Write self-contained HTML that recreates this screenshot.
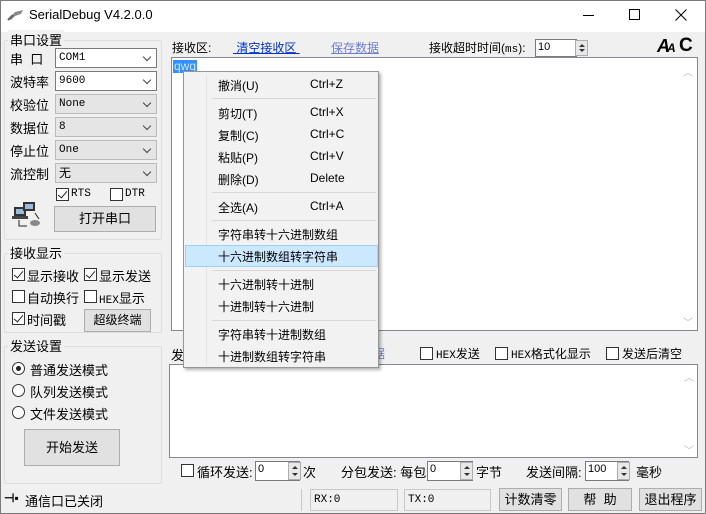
<!DOCTYPE html>
<html><head><meta charset="utf-8"><style>
*{box-sizing:border-box;margin:0;padding:0}
body{width:706px;height:514px;overflow:hidden;background:#f0f0f0;font-family:"Liberation Sans","Noto Sans CJK SC",sans-serif;font-size:12px;color:#000;position:relative}
.a{position:absolute;white-space:nowrap}
.win{position:absolute;left:0;top:0;width:706px;height:514px;border:1px solid #7a7a7a}
.title{position:absolute;left:1px;top:1px;width:704px;height:31px;background:#fff}
.gb{position:absolute;border:1px solid #dcdcdc;border-radius:2px}
.gl{position:absolute;background:#f0f0f0;padding:0 2px;font-size:13px}
.cb{position:absolute;height:20px;border:1px solid #bbb;background:#e5e5e5;font-family:"Liberation Mono","Noto Sans CJK SC",monospace;font-size:11px;line-height:18px;padding-left:3px}
.cb.w{background:#fff;border-color:#7a7a7a}
.cb:after{content:"";position:absolute;right:6px;top:5px;width:5px;height:5px;border-right:1px solid #444;border-bottom:1px solid #444;transform:rotate(45deg)}
.chk{position:absolute;width:13px;height:13px;border:1px solid #333;background:#fff}
.chk.on:after{content:"";position:absolute;left:3px;top:0px;width:4px;height:8px;border-right:1.5px solid #222;border-bottom:1.5px solid #222;transform:rotate(40deg)}
.rad{position:absolute;width:13px;height:13px;border:1px solid #333;border-radius:50%;background:#fff}
.rad.on:after{content:"";position:absolute;left:3px;top:3px;width:5px;height:5px;border-radius:50%;background:#222}
.btn{position:absolute;border:1px solid #adadad;background:#e1e1e1;text-align:center;font-size:13px}
.ta{position:absolute;background:#fff;border:1px solid #828790}
.inp{position:absolute;background:#fff;border:1px solid #7a7a7a;font-size:11px;padding-left:2px;line-height:15px}
.sp{position:absolute;border:1px solid #adadad;background:#e8e8e8}
.sp:before,.sp:after{content:"";position:absolute;left:3px;border-left:3px solid transparent;border-right:3px solid transparent}
.sp:before{top:3px;border-bottom:3px solid #333}
.sp:after{bottom:3px;border-top:3px solid #333}
.sb{position:absolute;border:1px solid #c8c8c8;background:#f0f0f0;font-family:"Liberation Mono",monospace;font-size:11px;padding-left:3px;line-height:20px}
.menu{position:absolute;left:183px;top:71px;width:196px;height:297px;background:#f2f2f2;border:1px solid #979797;box-shadow:2px 2px 3px rgba(0,0,0,.3)}
.mi{position:absolute;left:34px;font-size:12px}
.sc{position:absolute;left:126px;font-size:12px}
.sep{position:absolute;left:28px;width:164px;height:1px;background:#d7d7d7}
.m3{font-family:"Liberation Mono","Noto Sans CJK SC",monospace;font-size:11px}
</style></head><body>
<div class="win"></div>
<div class="title"></div>
<svg class="a" style="left:7px;top:8px" width="18" height="14"><path d="M2 11 L8 4 L16 2 L14 6 L8 8 L4 12Z" fill="#8a8a8a"/><path d="M1 12 L6 7" stroke="#666" stroke-width="2"/></svg>
<div class="a" style="left:29px;top:7px;font-size:13px">SerialDebug V4.2.0.0</div>
<div class="a" style="left:583px;top:15px;width:11px;height:1px;background:#000"></div>
<div class="a" style="left:629px;top:9px;width:11px;height:11px;border:1px solid #000"></div>
<svg class="a" style="left:675px;top:9px" width="12" height="12"><path d="M0.5 0.5 L11.5 11.5 M11.5 0.5 L0.5 11.5" stroke="#000" stroke-width="1"/></svg>

<!-- 串口设置 -->
<div class="gb" style="left:4px;top:40px;width:158px;height:200px"></div>
<div class="gl" style="left:8px;top:30px">串口设置</div>
<div class="a" style="left:10px;top:49px;font-size:13px">串 &nbsp;口</div>
<div class="a" style="left:10px;top:72px;font-size:13px">波特率</div>
<div class="a" style="left:10px;top:95px;font-size:13px">校验位</div>
<div class="a" style="left:10px;top:118px;font-size:13px">数据位</div>
<div class="a" style="left:10px;top:141px;font-size:13px">停止位</div>
<div class="a" style="left:10px;top:164px;font-size:13px">流控制</div>
<div class="cb w" style="left:55px;top:48px;width:102px">COM1</div>
<div class="cb w" style="left:55px;top:71px;width:102px">9600</div>
<div class="cb" style="left:55px;top:94px;width:102px">None</div>
<div class="cb" style="left:55px;top:117px;width:102px">8</div>
<div class="cb" style="left:55px;top:140px;width:102px">One</div>
<div class="cb" style="left:55px;top:163px;width:102px;font-family:'Noto Sans CJK SC',sans-serif;font-size:12px">无</div>
<div class="chk on" style="left:56px;top:188px"></div><div class="a m3" style="left:71px;top:188px">RTS</div>
<div class="chk" style="left:110px;top:188px"></div><div class="a m3" style="left:125px;top:188px">DTR</div>
<svg class="a" style="left:11px;top:199px" width="32" height="32"><rect x="3" y="8" width="12" height="9" fill="#333"/><rect x="5" y="10" width="8" height="5" fill="#9bd"/><rect x="1" y="17" width="16" height="3" fill="#444"/><rect x="12" y="3" width="12" height="9" fill="#333"/><rect x="14" y="5" width="8" height="5" fill="#9bd"/><path d="M8 21 V27 H16 M24 14 L28 20" stroke="#222" fill="none"/><ellipse cx="24" cy="24" rx="5" ry="3" fill="#888"/></svg>
<div class="btn" style="left:54px;top:206px;width:102px;height:26px;line-height:24px">打开串口</div>

<!-- 接收显示 -->
<div class="gb" style="left:4px;top:253px;width:158px;height:80px"></div>
<div class="gl" style="left:8px;top:243px">接收显示</div>
<div class="chk on" style="left:12px;top:268px"></div><div class="a" style="left:27px;top:266px;font-size:13px">显示接收</div>
<div class="chk on" style="left:84px;top:268px"></div><div class="a" style="left:99px;top:266px;font-size:13px">显示发送</div>
<div class="chk" style="left:12px;top:290px"></div><div class="a" style="left:27px;top:288px;font-size:13px">自动换行</div>
<div class="chk" style="left:84px;top:290px"></div><div class="a" style="left:99px;top:288px;font-size:13px"><span class="m3">HEX</span>显示</div>
<div class="chk on" style="left:12px;top:312px"></div><div class="a" style="left:27px;top:310px;font-size:13px">时间戳</div>
<div class="btn" style="left:84px;top:309px;width:67px;height:23px;line-height:21px;font-size:12px">超级终端</div>

<!-- 发送设置 -->
<div class="gb" style="left:4px;top:346px;width:158px;height:138px"></div>
<div class="gl" style="left:8px;top:336px">发送设置</div>
<div class="rad on" style="left:12px;top:362px"></div><div class="a" style="left:30px;top:360px;font-size:13px">普通发送模式</div>
<div class="rad" style="left:12px;top:384px"></div><div class="a" style="left:30px;top:382px;font-size:13px">队列发送模式</div>
<div class="rad" style="left:12px;top:406px"></div><div class="a" style="left:30px;top:404px;font-size:13px">文件发送模式</div>
<div class="btn" style="left:24px;top:429px;width:96px;height:37px;line-height:35px">开始发送</div>

<!-- receive header -->
<div class="a" style="left:172px;top:39px">接收区:</div>
<div class="a" style="left:233px;top:39px;color:#0033cc;text-decoration:underline">&nbsp;清空接收区&nbsp;</div>
<div class="a" style="left:331px;top:39px;color:#6c7fd0;text-decoration:underline">保存数据</div>
<div class="a" style="left:429px;top:39px">接收超时时间(<span class="m3">ms</span>):</div>
<div class="inp" style="left:535px;top:39px;width:42px;height:18px">10</div>
<div class="sp" style="left:575px;top:40px;width:13px;height:16px"></div>
<div class="a" style="left:657px;top:36px;font-size:18px;font-weight:bold;font-style:italic;letter-spacing:-3px">A<span style="font-size:12px">A</span></div>
<div class="a" style="left:679px;top:35px;font-size:19px;font-weight:bold">C</div>

<div class="ta" style="left:171px;top:57px;width:527px;height:274px"></div>
<div class="a" style="left:173px;top:60px;background:#3390ff;color:#cfe4ff;font-size:12px;line-height:13px;padding:0 1px">qwq</div>
<div class="a" style="left:683px;top:64px;color:#bbb;font-size:10px">︿</div>
<div class="a" style="left:683px;top:314px;color:#bbb;font-size:10px">﹀</div>

<!-- send header -->
<div class="a" style="left:171px;top:345px;font-size:13px">发</div>
<div class="a" style="left:373px;top:345px;color:#6c7fd0">据</div>
<div class="chk" style="left:420px;top:347px"></div><div class="a" style="left:436px;top:345px"><span class="m3">HEX</span>发送</div>
<div class="chk" style="left:495px;top:347px"></div><div class="a" style="left:511px;top:345px"><span class="m3">HEX</span>格式化显示</div>
<div class="chk" style="left:606px;top:347px"></div><div class="a" style="left:622px;top:345px">发送后清空</div>
<div class="ta" style="left:169px;top:364px;width:529px;height:94px"></div>
<div class="a" style="left:684px;top:369px;color:#bbb;font-size:10px">︿</div>
<div class="a" style="left:684px;top:442px;color:#bbb;font-size:10px">﹀</div>

<div class="chk" style="left:181px;top:464px"></div><div class="a" style="left:197px;top:462px;font-size:13px">循环发送:</div>
<div class="inp" style="left:255px;top:461px;width:45px;height:20px">0</div><div class="sp" style="left:288px;top:462px;width:13px;height:18px"></div>
<div class="a" style="left:303px;top:462px;font-size:13px">次</div>
<div class="a" style="left:341px;top:462px;font-size:13px">分包发送: 每包</div>
<div class="inp" style="left:427px;top:461px;width:46px;height:20px">0</div><div class="sp" style="left:460px;top:462px;width:13px;height:18px"></div>
<div class="a" style="left:476px;top:462px;font-size:13px">字节</div>
<div class="a" style="left:526px;top:462px;font-size:13px">发送间隔:</div>
<div class="inp" style="left:585px;top:461px;width:44px;height:20px">100</div><div class="sp" style="left:617px;top:462px;width:13px;height:18px"></div>
<div class="a" style="left:636px;top:462px;font-size:13px">毫秒</div>

<!-- status -->
<div class="a" style="left:4px;top:491px;font-size:12px;font-weight:bold">⊣▪</div>
<div class="a" style="left:22px;top:489px;width:280px;height:22px;border-right:1px solid #c8c8c8"></div>
<div class="a" style="left:25px;top:491px;font-size:13px">通信口已关闭</div>
<div class="sb" style="left:310px;top:489px;width:88px;height:22px">RX:0</div>
<div class="sb" style="left:404px;top:489px;width:87px;height:22px">TX:0</div>
<div class="btn" style="left:499px;top:488px;width:63px;height:23px;line-height:21px">计数清零</div>
<div class="btn" style="left:568px;top:488px;width:64px;height:23px;line-height:21px">帮 &nbsp;助</div>
<div class="btn" style="left:639px;top:488px;width:63px;height:23px;line-height:21px">退出程序</div>

<!-- context menu -->
<div class="menu">
<div class="a" style="left:22px;top:2px;width:1px;height:291px;background:#e4e4e4"></div>
<div class="mi" style="top:5px">撤消(U)</div><div class="sc" style="top:5px">Ctrl+Z</div>
<div class="sep" style="top:26px"></div>
<div class="mi" style="top:33px">剪切(T)</div><div class="sc" style="top:33px">Ctrl+X</div>
<div class="mi" style="top:55px">复制(C)</div><div class="sc" style="top:55px">Ctrl+C</div>
<div class="mi" style="top:77px">粘贴(P)</div><div class="sc" style="top:77px">Ctrl+V</div>
<div class="mi" style="top:99px">删除(D)</div><div class="sc" style="top:99px">Delete</div>
<div class="sep" style="top:120px"></div>
<div class="mi" style="top:127px">全选(A)</div><div class="sc" style="top:127px">Ctrl+A</div>
<div class="sep" style="top:148px"></div>
<div class="mi" style="top:154px">字符串转十六进制数组</div>
<div class="a" style="left:1px;top:173px;width:193px;height:22px;background:#cce8ff;border:1px solid #99d1ff"></div>
<div class="mi" style="top:176px">十六进制数组转字符串</div>
<div class="sep" style="top:198px"></div>
<div class="mi" style="top:204px">十六进制转十进制</div>
<div class="mi" style="top:226px">十进制转十六进制</div>
<div class="sep" style="top:248px"></div>
<div class="mi" style="top:254px">字符串转十进制数组</div>
<div class="mi" style="top:276px">十进制数组转字符串</div>
</div>
</body></html>
